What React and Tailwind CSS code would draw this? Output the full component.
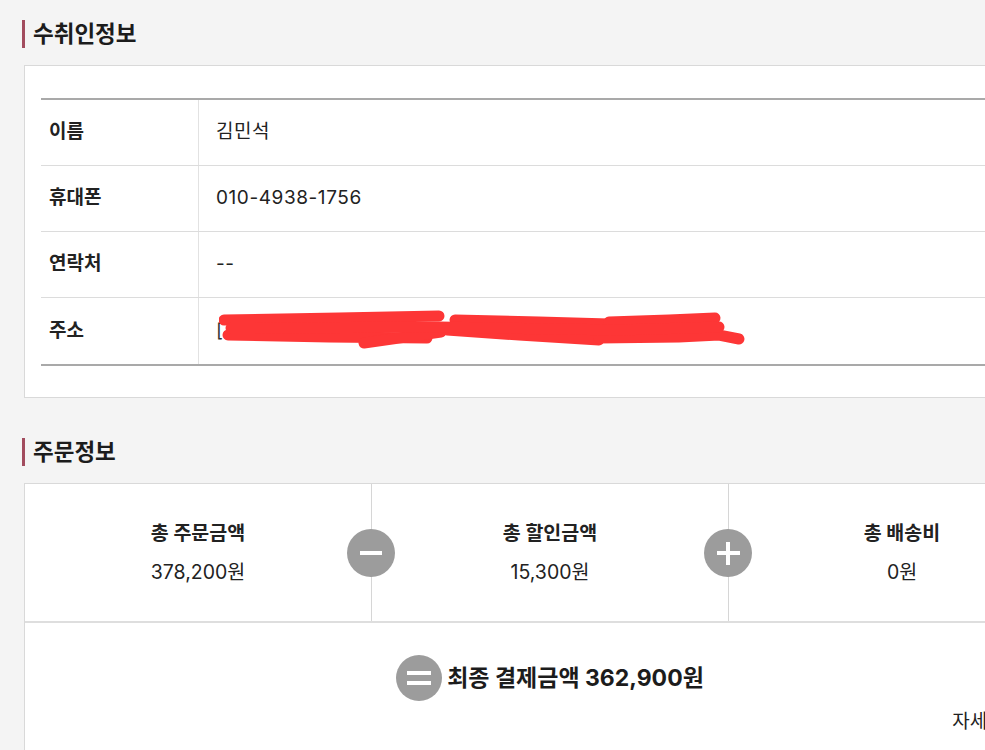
import React from 'react'

const receiver = [
  { label: '이름', value: '김민석' },
  { label: '휴대폰', value: '010-4938-1756' },
  { label: '연락처', value: '--' },
  { label: '주소', value: 'address' },
]

function SectionTitle({ children }) {
  return (
    <div className="ml-[-2px] flex h-[28px] items-center border-l-[3px] border-[#a24c5e] pl-[8px] text-[22.5px] font-bold leading-none text-[#1c1c1c]">
      {children}
    </div>
  )
}

function Circle({ type, size = 'w-[48px] h-[48px]' }) {
  return (
    <div className={`flex items-center justify-center rounded-full bg-[#9c9c9c] ${size}`}>
      {type === 'minus' && <div className="h-[4px] w-[22px] bg-white" />}
      {type === 'plus' && (
        <div className="relative h-[23px] w-[23px]">
          <div className="absolute left-0 top-[9.5px] h-[4px] w-[23px] bg-white" />
          <div className="absolute left-[9.5px] top-0 h-[23px] w-[4px] bg-white" />
        </div>
      )}
      {type === 'equal' && (
        <div className="flex flex-col gap-[6px]">
          <div className="h-[4px] w-[24px] bg-white" />
          <div className="h-[4px] w-[24px] bg-white" />
        </div>
      )}
    </div>
  )
}

function Scribble() {
  // red marker over the redacted address
  return (
    <svg className="absolute left-[20px] top-[10px]" width="540" height="46" viewBox="0 0 540 46">
      <g stroke="#fd3636" strokeWidth="11" strokeLinecap="round" fill="none">
        <path d="M5 12 L120 10 L220 8" />
        <path d="M9 27 L110 29 L208 30" />
        <path d="M145 35 L222 24" />
        <path d="M236 12 L320 14 L390 16" />
        <path d="M228 22 L300 27 L380 32" />
        <path d="M390 14 L450 12 L496 10" />
        <path d="M380 30 L460 29 L500 27 L520 31" />
        <path d="M12 20 L220 19 L400 22 L500 19" />
      </g>
    </svg>
  )
}

function OrderCol({ label, value, width, sign, last }) {
  return (
    <div className={`relative flex h-full flex-col items-center justify-center ${width} ${last ? '' : 'border-r border-[#d6d6d6]'}`}>
      <p className="text-[19.5px] font-bold leading-[26px] text-[#222]">{label}</p>
      <p className="mt-[13px] text-[19.5px] leading-[26px] text-[#222]">{value}</p>
      {sign && (
        <div className="absolute right-[-24px] top-[45px] z-10">
          <Circle type={sign} />
        </div>
      )}
    </div>
  )
}

export default function App() {
  return (
    <div className="min-h-screen overflow-hidden bg-[#f4f4f4] pl-[24px] pt-[20px] font-[Inter,'Noto_Sans_CJK_KR',sans-serif]">
      <SectionTitle>수취인정보</SectionTitle>

      {/* 수취인 카드 */}
      <div className="mt-[17px] w-[1052px] border border-[#d9d9d9] bg-white px-[16px] pb-[31px] pt-[32px]">
        <div className="border-y-2 border-[#a9a9a9]">
          {receiver.map((r, i) => (
            <div key={i} className={`flex h-[66px] ${i < receiver.length - 1 ? 'border-b border-[#dcdcdc]' : ''}`}>
              <div className="flex w-[158px] items-center border-r border-[#e2e2e2] pl-[8px] text-[19px] font-bold text-[#222]">
                {r.label}
              </div>
              <div className="relative flex flex-1 items-center pl-[17px] text-[19px] tracking-[0.03em] text-[#222]">
                {r.value === 'address' ? (
                  <>
                    <span className="text-[#333]">[</span>
                    <Scribble />
                  </>
                ) : (
                  r.value
                )}
              </div>
            </div>
          ))}
        </div>
      </div>

      <div className="mt-[40px]">
        <SectionTitle>주문정보</SectionTitle>
      </div>

      {/* 주문 카드 */}
      <div className="mt-[17px] w-[1052px] border border-[#d9d9d9] bg-white">
        <div className="flex h-[139px] border-b-2 border-[#dedede]">
          <OrderCol label="총 주문금액" value="378,200원" width="w-[347px]" sign="minus" />
          <OrderCol label="총 할인금액" value="15,300원" width="w-[357px]" sign="plus" />
          <OrderCol label="총 배송비" value="0원" width="flex-1" last />
        </div>
        <div className="flex items-center justify-center gap-[5px] pt-[32px]">
          <Circle type="equal" size="w-[46px] h-[46px]" />
          <p className="text-[23px] font-bold text-[#1c1c1c]">최종 결제금액 362,900원</p>
        </div>
        <div className="mt-[8px] flex justify-end pb-[20px] pr-[30px]">
          <p className="text-[19px] leading-[26px] text-[#222]">자세히 보기</p>
        </div>
      </div>
    </div>
  )
}
